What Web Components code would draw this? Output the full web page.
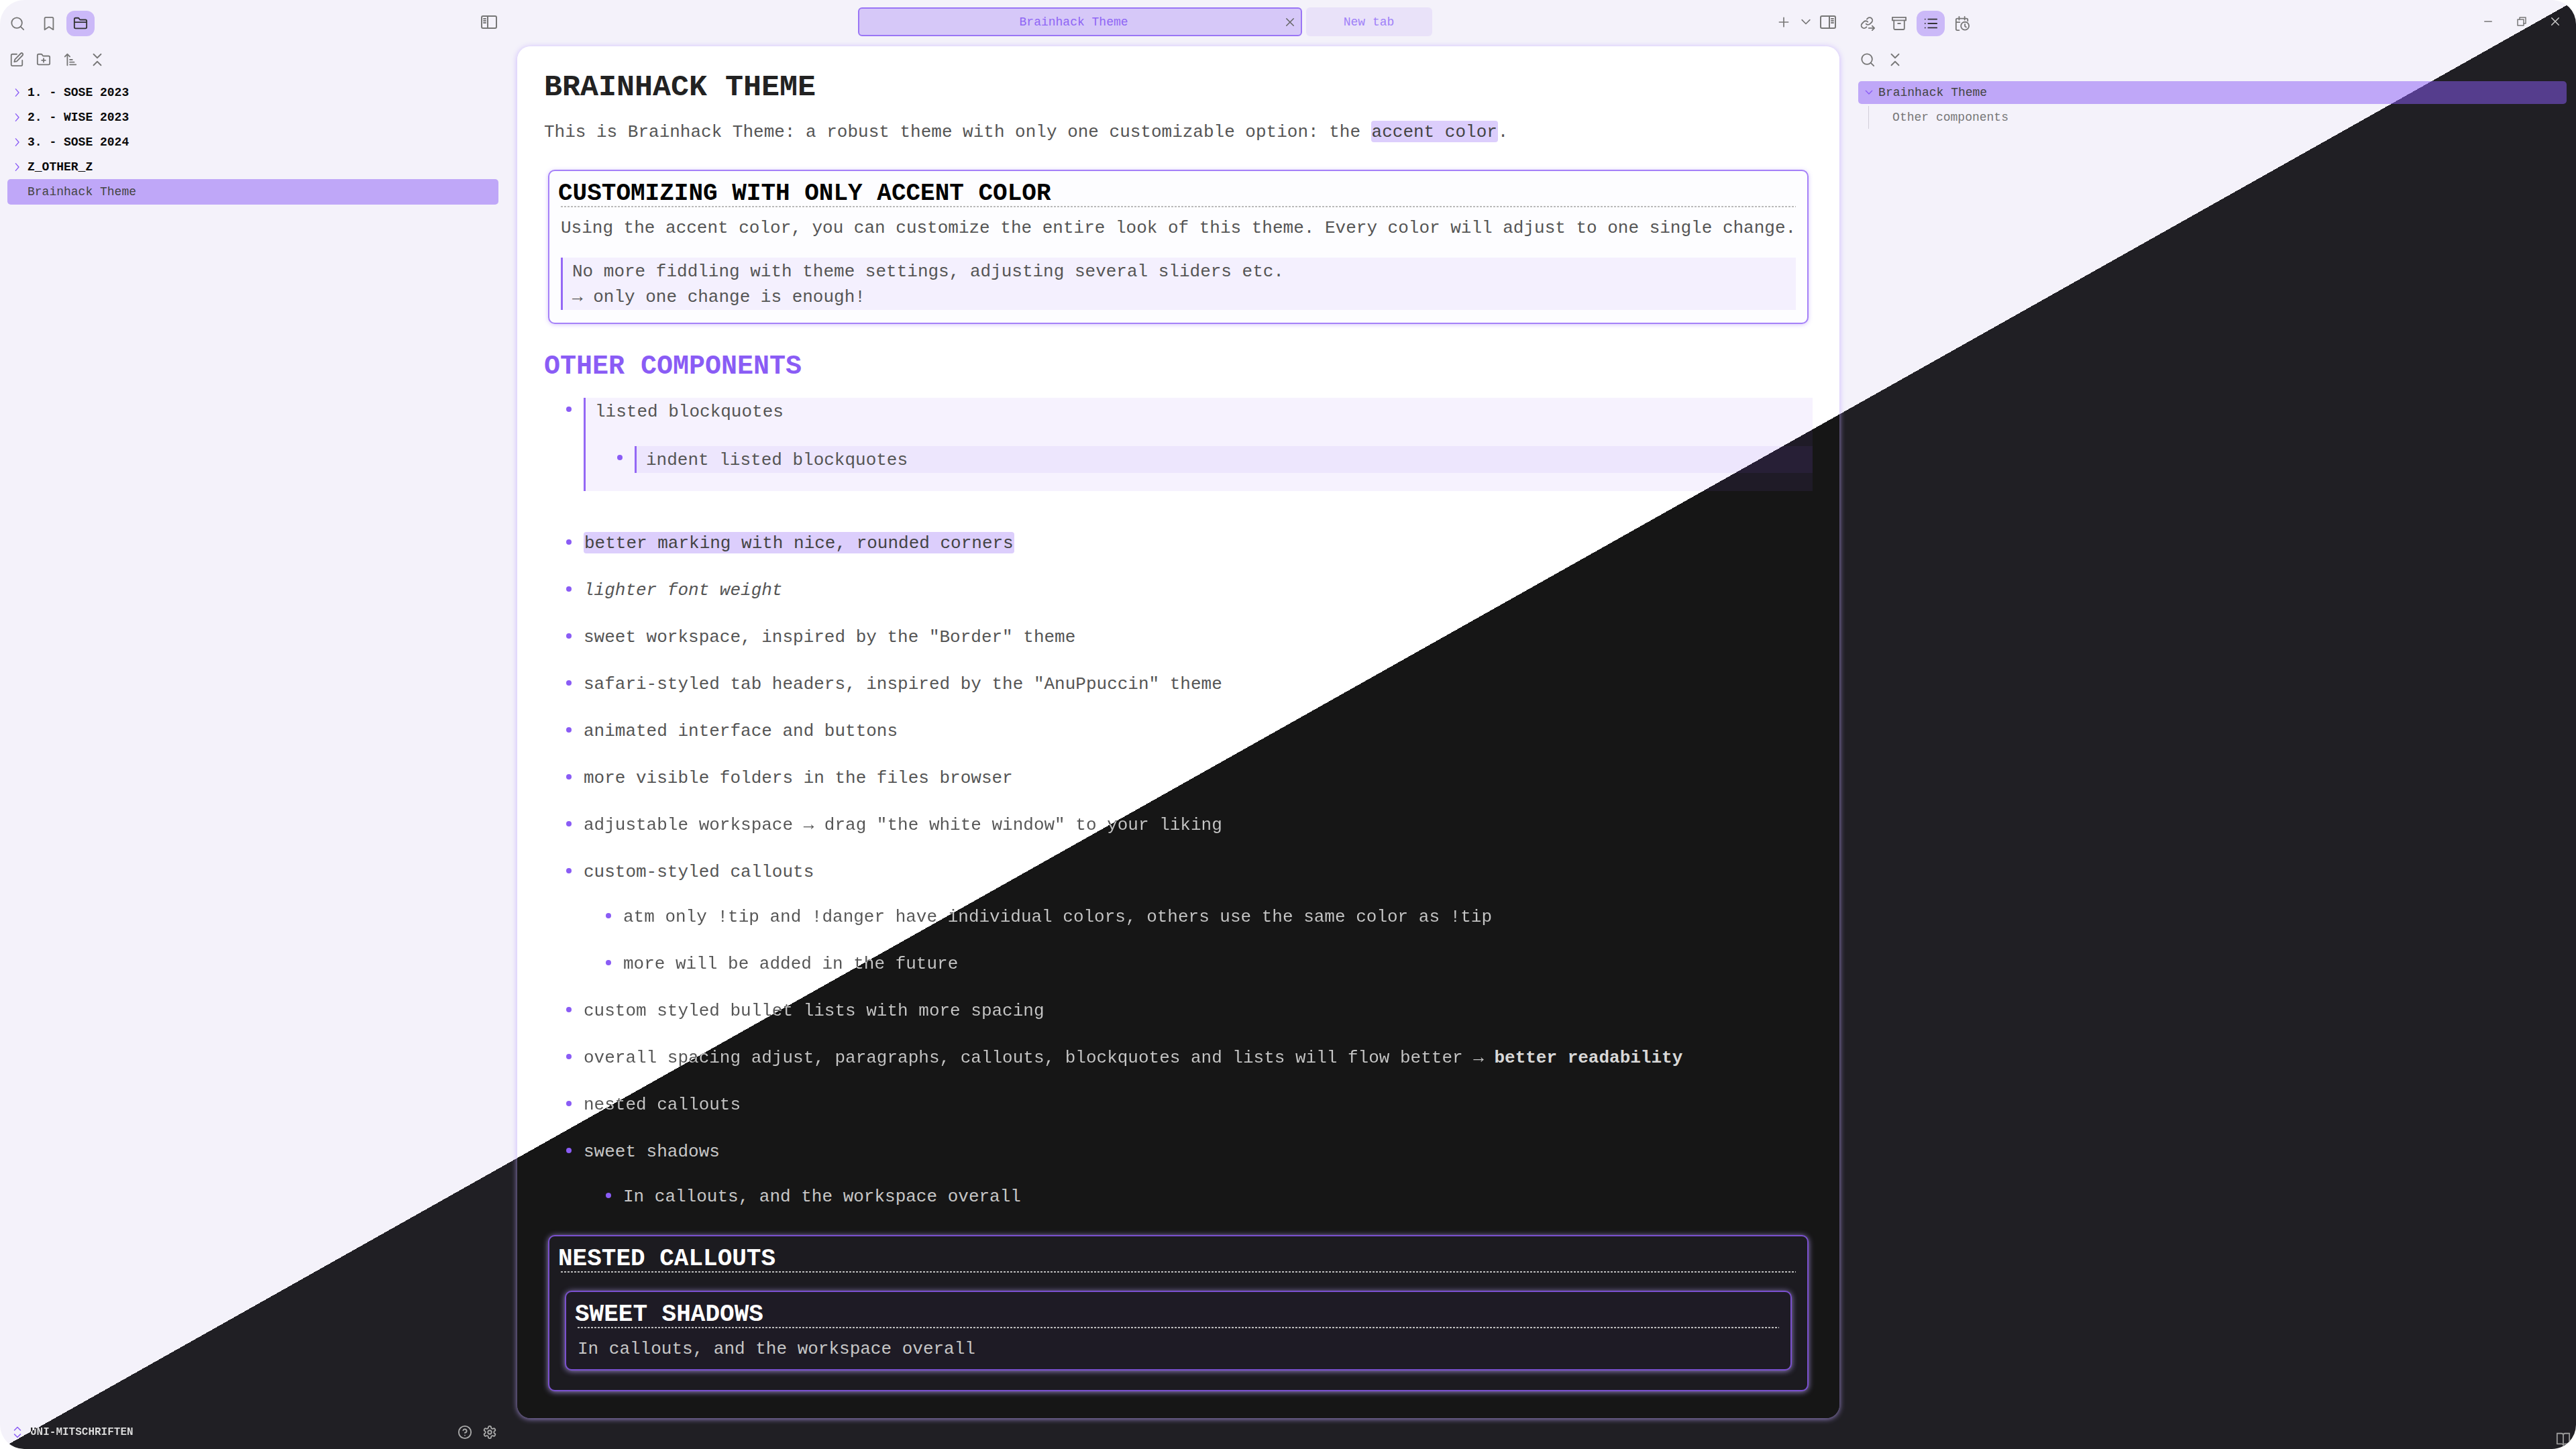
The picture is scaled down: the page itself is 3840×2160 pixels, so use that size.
<!DOCTYPE html>
<html lang="en">
<head>
<meta charset="utf-8">
<title>Brainhack Theme</title>
<style>
  html, body { margin: 0; height: 100%; background: #fff; }
  body {
    --accent: #8a5cf5;
    --split-text: linear-gradient(to bottom right, #555 50%, #c6c6c6 50%) fixed;
    font-family: "Liberation Mono", "DejaVu Sans Mono", monospace;
    font-size: 18px;
    color: #777;
  }
  h1, h2, p, ul { margin: 0; padding: 0; }
  h1 { font-size: 45px; line-height: 54px; color: #222; }
  h2 { font-size: 40px; line-height: 48px; color: var(--accent); margin-top: 40px; }
  p, li { font-size: 26px; line-height: 39px; color: #555; }
  h1 + p { margin: 20px 0 36px; }
  ul { list-style: none; padding-left: 33px; display: grid; gap: 31px; }
  li { display: grid; grid-template-columns: 8px 1fr; gap: 18px; }
  li::before { content: ""; width: 8px; height: 8px; border-radius: 4px; margin-top: 13px; background: var(--accent); }
  li ul { margin-top: 28px; }
  h2 + ul { margin: 22px 0 37px; }
  mark { background: rgba(138, 92, 245, .3); color: #444; border-radius: 4px; padding: 2px 1px 0; }
  .split { background: var(--split-text); -webkit-background-clip: text; background-clip: text; -webkit-text-fill-color: transparent; }
  .dark { color: #c6c6c6; }
  strong { color: #d8d8d8; }
  bh-quote ul { margin: 32px 0 27px; }
  .after-quote { margin-top: 28px; }
</style>
</head>
<body>
<bh-app>
  <bh-sidebar slot="left">
    <bh-button slot="tabs" icon="search" label="Search"></bh-button>
    <bh-button slot="tabs" icon="bookmark" label="Bookmarks"></bh-button>
    <bh-button slot="tabs" icon="folder" label="Files" active></bh-button>
    <bh-button slot="toggle" icon="panel-left" label="Collapse left sidebar"></bh-button>
    <bh-button slot="tools" icon="edit" label="New note"></bh-button>
    <bh-button slot="tools" icon="folder-plus" label="New folder"></bh-button>
    <bh-button slot="tools" icon="sort" label="Change sort order"></bh-button>
    <bh-button slot="tools" icon="collapse" label="Collapse all"></bh-button>
    <bh-folder>1. - SOSE 2023</bh-folder>
    <bh-folder>2. - WISE 2023</bh-folder>
    <bh-folder>3. - SOSE 2024</bh-folder>
    <bh-folder>Z_OTHER_Z</bh-folder>
    <bh-file>Brainhack Theme</bh-file>
    <bh-vault slot="footer">UNI-MITSCHRIFTEN</bh-vault>
  </bh-sidebar>

  <bh-tabbar slot="tabs">
    <bh-tab active>Brainhack Theme</bh-tab>
    <bh-tab>New tab</bh-tab>
    <bh-button slot="tools" icon="plus" label="New tab"></bh-button>
    <bh-button slot="tools" icon="down" label="Tab list"></bh-button>
    <bh-button slot="tools" icon="panel-right" label="Collapse right sidebar"></bh-button>
  </bh-tabbar>

  <bh-note slot="note">
    <h1>BRAINHACK THEME</h1>
    <p>This is Brainhack Theme: a robust theme with only one customizable option: the <mark>accent color</mark>.</p>
    <bh-callout heading="CUSTOMIZING WITH ONLY ACCENT COLOR">
      <p>Using the accent color, you can customize the entire look of this theme. Every color will adjust to one single change.</p>
      <bh-quote class="in-callout">No more fiddling with theme settings, adjusting several sliders etc.<br>→ only one change is enough!</bh-quote>
    </bh-callout>
    <h2>OTHER COMPONENTS</h2>
    <ul>
      <li><bh-quote>listed blockquotes
        <ul><li><bh-quote>indent listed blockquotes</bh-quote></li></ul>
      </bh-quote></li>
      <li class="after-quote"><div><mark>better marking with nice, rounded corners</mark></div></li>
      <li><em>lighter font weight</em></li>
      <li><div>sweet workspace, inspired by the "Border" theme</div></li>
      <li><div>safari-styled tab headers, inspired by the "AnuPpuccin" theme</div></li>
      <li><div>animated interface and buttons</div></li>
      <li><div>more visible folders in the files browser</div></li>
      <li><div><span class="split">adjustable workspace → drag "the white window" to your liking</span></div></li>
      <li><div>custom-styled callouts
        <ul>
          <li><div><span class="split">atm only !tip and !danger have individual colors, others use the same color as !tip</span></div></li>
          <li><div><span class="split">more will be added in the future</span></div></li>
        </ul></div></li>
      <li><div><span class="split">custom styled bullet lists with more spacing</span></div></li>
      <li><div><span class="split">overall spacing adjust, paragraphs, callouts, blockquotes and lists will flow better → </span><strong>better readability</strong></div></li>
      <li><div><span class="split">nested callouts</span></div></li>
      <li class="dark"><div>sweet shadows
        <ul><li class="dark"><div>In callouts, and the workspace overall</div></li></ul></div></li>
    </ul>
    <bh-callout dark heading="NESTED CALLOUTS">
      <bh-callout dark nested heading="SWEET SHADOWS">
        <p class="dark">In callouts, and the workspace overall</p>
      </bh-callout>
    </bh-callout>
  </bh-note>

  <bh-outline slot="right">
    <bh-button slot="tabs" icon="link" label="Outgoing links"></bh-button>
    <bh-button slot="tabs" icon="archive" label="Archive"></bh-button>
    <bh-button slot="tabs" icon="list" label="Outline" active></bh-button>
    <bh-button slot="tabs" icon="calendar" label="Calendar"></bh-button>
  </bh-outline>
</bh-app>

<script>
const cog = 'M12.22 2h-.44a2 2 0 0 0-2 2v.18a2 2 0 0 1-1 1.73l-.43.25a2 2 0 0 1-2 0l-.15-.08a2 2 0 0 0-2.73.73l-.22.38a2 2 0 0 0 .73 2.73l.15.1a2 2 0 0 1 1 1.72v.51a2 2 0 0 1-1 1.74l-.15.09a2 2 0 0 0-.73 2.73l.22.38a2 2 0 0 0 2.73.73l.15-.08a2 2 0 0 1 2 0l.43.25a2 2 0 0 1 1 1.73V20a2 2 0 0 0 2 2h.44a2 2 0 0 0 2-2v-.18a2 2 0 0 1 1-1.73l.43-.25a2 2 0 0 1 2 0l.15.08a2 2 0 0 0 2.73-.73l.22-.39a2 2 0 0 0-.73-2.73l-.15-.08a2 2 0 0 1-1-1.74v-.5a2 2 0 0 1 1-1.74l.15-.09a2 2 0 0 0 .73-2.73l-.22-.38a2 2 0 0 0-2.73-.73l-.15.08a2 2 0 0 1-2 0l-.43-.25a2 2 0 0 1-1-1.73V4a2 2 0 0 0-2-2z';
const folder = '<path d="M20 20a2 2 0 0 0 2-2V8a2 2 0 0 0-2-2h-7.9a2 2 0 0 1-1.7-.9L9.6 3.9A2 2 0 0 0 7.9 3H4a2 2 0 0 0-2 2v13a2 2 0 0 0 2 2Z"/>';
const ICONS = {
  search: '<circle cx="11" cy="11" r="8.5"/><path d="m22 22-5-5"/>',
  bookmark: '<path d="m19 22-7-4.500-7 4.500V4a2 2 0 0 1 2-2h10a2 2 0 0 1 2 2z"/>',
  folder: folder + '<path d="M2 10h20"/>',
  'folder-plus': folder + '<path d="M12 10v6M9 13h6"/>',
  edit: '<path d="M12 3H5a2 2 0 0 0-2 2v15a2 2 0 0 0 2 2h14a2 2 0 0 0 2-2v-7"/><path d="M18.4 1.9a2.1 2.1 0 0 1 3 3L12 14.5l-4 1 1-4Z"/>',
  sort: '<path d="m3 7 4-4 4 4M7 3v18M11 12h4M11 16h7M11 20h10"/>',
  collapse: '<path d="m6 21 6-6 6 6M6 3l6 6 6-6"/>',
  'panel-left': '<rect x="1" y="3" width="22" height="18" rx="2"/><path d="M10 3v18M4 7h3M4 10h3M4 13h3"/>',
  'panel-right': '<rect x="1" y="3" width="22" height="18" rx="2"/><path d="M14 3v18M17 7h3M17 10h3M17 13h3"/>',
  plus: '<path d="M4 12h16M12 4v16"/>',
  down: '<path d="m5 8 7 7 7-7"/>',
  right: '<path d="m8 4 7 8-7 8"/>',
  x: '<path d="M5 5l14 14M19 5 5 19"/>',
  link: '<path d="M9.5 12.6a4.5 4.5 0 0 0 6.4.1l2.6-2.6a4.5 4.5 0 0 0-6.4-6.4l-1.3 1.3"/><path d="M12.3 9.3a4.5 4.5 0 0 0-6.4-.1l-2.8 2.8a4.5 4.5 0 0 0 6.4 6.4l.8-.8"/><path d="M14 19.5h9M19.5 16l3.5 3.5-3.5 3.5"/>',
  archive: '<rect x="1" y="2" width="22" height="5"/><path d="M3.5 7v13a1.8 1.8 0 0 0 1.8 1.8h13.4a1.8 1.8 0 0 0 1.8-1.8V7M10 12h4"/>',
  list: '<path d="M8 5h14M8 12h14M8 19h14M3 5h.01M3 12h.01M3 19h.01"/>',
  calendar: '<path d="M21 8V6a2 2 0 0 0-2-2H4a2 2 0 0 0-2 2v15a2 2 0 0 0 2 2h3M16 1v5M7 1v5M2 10h6"/><circle cx="16.5" cy="16" r="6.5"/><path d="M16.5 13v3.5l2 1.5"/>',
  help: '<circle cx="12" cy="12" r="10"/><path d="M9.1 9a3 3 0 0 1 5.8 1c0 2-3 3-3 3M12 17h.01"/>',
  settings: '<path d="' + cog + '"/><circle cx="12" cy="12" r="3"/>',
  updown: '<path d="m6 8 6-6 6 6M6 16l6 6 6-6"/>',
  minimize: '<path d="M5 12h14"/>',
  restore: '<rect x="4" y="8" width="12" height="12"/><path d="M8 8V4h12v12h-4"/>',
  book: '<path d="M2 3h7a3 3 0 0 1 3 3v16a3 3 0 0 0-3-2H2ZM22 3h-7a3 3 0 0 0-3 3v16a3 3 0 0 1 3-2h7Z"/>'
};

const reset = `
  * { box-sizing: border-box; }
  button, a { font: inherit; color: inherit; background: none; border: 0; margin: 0; padding: 0; text-decoration: none; text-align: left; }
`;

function define(name, html) {
  customElements.define(name, class extends HTMLElement {
    connectedCallback() {
      if (this.shadowRoot) return;
      const template = document.createElement('template');
      template.innerHTML = '<style>' + reset + '</style>' + (typeof html === 'function' ? html(this) : html);
      this.attachShadow({ mode: 'open' }).append(template.content.cloneNode(true));
    }
  });
}

define('bh-icon', el => `
  <style>
    :host { display: inline-flex; flex: none; }
    svg { display: block; width: var(--icon, 22px); height: var(--icon, 22px); fill: none; stroke: currentColor; stroke-width: 2; stroke-linecap: round; stroke-linejoin: round; }
  </style>
  <svg viewBox="0 0 24 24" aria-hidden="true">${ICONS[el.getAttribute('name')]}</svg>`);

define('bh-button', el => `
  <style>
    :host { display: block; flex: none; color: #777; }
    button { display: flex; align-items: center; justify-content: center; width: var(--w, 42px); height: 38px; border-radius: 12px; }
    :host([active]) button { background: rgba(138, 92, 245, .38); color: #333; }
    :host([icon^="panel"]) { --icon: 24px; }
    :host([icon="plus"]), :host([icon="down"]) { --icon: 20px; }
  </style>
  <button aria-label="${el.getAttribute('label')}"><bh-icon name="${el.getAttribute('icon')}"></bh-icon></button>`);

define('bh-app', `
  <style>
    :host {
      display: grid; grid-template: 69px 1fr / 771px 1fr 1099px;
      min-height: 100vh; padding-bottom: 46px; box-sizing: border-box;
      border-radius: 36px; overflow: hidden;
      background: linear-gradient(to bottom right, #f4f2fa 50%, #201f24 50%) fixed;
    }
    .left, .right { grid-row: 1 / 3; display: grid; margin-bottom: -46px; }
    .left { grid-column: 1; }
    .right { grid-column: 3; }
    .tabs { grid-column: 2; grid-row: 1; display: grid; }
    .note { grid-column: 2; grid-row: 2; display: grid; }
  </style>
  <aside class="left"><slot name="left"></slot></aside>
  <nav class="tabs"><slot name="tabs"></slot></nav>
  <main class="note"><slot name="note"></slot></main>
  <aside class="right"><slot name="right"></slot></aside>`);

define('bh-sidebar', `
  <style>
    :host { display: flex; flex-direction: column; }
    header { display: flex; align-items: flex-start; justify-content: space-between; height: 38px; margin-top: 16px; padding: 0 21px 0 5px; }
    .tabs { display: flex; gap: 5px; }
    .toggle { margin-top: -2px; }
    .tools { display: flex; --w: 40px; padding: 16px 0 0 5px; height: 49px; box-sizing: content-box; }
    .tree { flex: 1; padding: 0 28px 0 11px; }
  </style>
  <header><div class="tabs"><slot name="tabs"></slot></div><div class="toggle"><slot name="toggle"></slot></div></header>
  <div class="tools"><slot name="tools"></slot></div>
  <nav class="tree"><slot></slot></nav>
  <slot name="footer"></slot>`);

define('bh-folder', `
  <style>
    :host { display: block; }
    button { display: flex; align-items: center; gap: 7px; width: 100%; height: 37px; padding-left: 7px; font-weight: bold; color: #0a0a0a; }
    bh-icon { --icon: 16px; color: #8a5cf5; }
  </style>
  <button><bh-icon name="right"></bh-icon><slot></slot></button>`);

define('bh-file', `
  <style>
    :host { display: block; }
    a { display: flex; align-items: center; height: 38px; padding-left: 30px; border-radius: 5px; background: rgba(138, 92, 245, .5); color: #444; }
  </style>
  <a href="#"><slot></slot></a>`);

define('bh-vault', `
  <style>
    :host { display: flex; align-items: center; justify-content: space-between; height: 38px; margin-bottom: 6px; padding: 0 23px 0 17px; }
    .name { display: flex; align-items: center; gap: 10px; font-size: 16px; font-weight: bold; }
    .name bh-icon { --icon: 18px; color: #8a5cf5; }
    .name span { color: #ddd; background: linear-gradient(to bottom right, #222 50%, #ddd 50%) fixed; -webkit-background-clip: text; background-clip: text; -webkit-text-fill-color: transparent; }
    .tools { display: flex; --w: 37px; }
    .tools bh-button { color: #aaa; }
  </style>
  <button class="name"><bh-icon name="updown"></bh-icon><span><slot></slot></span></button>
  <div class="tools"><bh-button icon="help" label="Help"></bh-button><bh-button icon="settings" label="Settings"></bh-button></div>`);

define('bh-tabbar', `
  <style>
    :host { display: flex; align-items: flex-start; padding-top: 11px; }
    .tabs { flex: 1; display: flex; justify-content: center; gap: 6px; }
    .tools { display: flex; align-items: center; height: 43px; width: 100px; --w: 33px; }
  </style>
  <div class="tabs"><slot></slot></div>
  <div class="tools"><slot name="tools"></slot></div>`);

define('bh-tab', el => `
  <style>
    :host { display: flex; align-items: center; width: 188px; height: 43px; padding: 0 7px; box-sizing: border-box; border-radius: 6px; background: rgba(138, 92, 245, .1); color: #a081f8; }
    :host([active]) { width: 662px; background: rgba(138, 92, 245, .28); border: 2px solid #9a75f5; color: #8f66f5; }
    .title { flex: 1; text-align: center; }
    .close { display: flex; --icon: 18px; color: #666; }
  </style>
  <button class="title"><slot></slot></button>
  ${el.hasAttribute('active') ? '<button class="close" aria-label="Close tab"><bh-icon name="x"></bh-icon></button>' : ''}`);

define('bh-note', `
  <style>
    :host {
      display: block; padding: 35px 40px 0; border-radius: 20px;
      background: linear-gradient(to bottom right, #fff 50%, #161616 50%) fixed;
      box-shadow: 0 1px 8px rgba(190, 165, 255, .8);
    }
  </style>
  <article><slot></slot></article>`);

define('bh-callout', el => `
  <style>
    :host {
      display: block; margin: 0 6px; padding: 16px 17px 10px; border: 2px solid #a581f8; border-radius: 10px;
      background: #fdfdff; box-shadow: 0 1px 6px rgba(138, 92, 245, .35); color: #000;
    }
    :host([dark]) { background: #1c1b20; border-color: #7a50cf; box-shadow: 0 1px 9px rgba(190, 165, 255, .75); color: #fff; }
    :host([nested]) { background: #1e1b25; margin: 15px 6px 19px; }
    h3 { margin: 0 0 0 -4px; font-size: 36px; line-height: 36px; white-space: nowrap; }
    .rule { height: 2px; background: repeating-linear-gradient(to right, #bbb 0 3px, transparent 3px 5px); }
    .body { white-space: nowrap; display: flow-root; padding-top: 12px; }
    ::slotted(.in-callout) { margin: 24px 0 9px; --quote: rgba(138, 92, 245, .08); }
  </style>
  <h3>${el.getAttribute('heading')}</h3>
  <div class="rule"></div>
  <div class="body"><slot></slot></div>`);

define('bh-quote', `
  <style>
    :host {
      display: flow-root; padding: 2px 0 0 14px; border-left: 3px solid #9468f5;
      background: var(--quote, rgba(138, 92, 245, .077)); font-size: 26px; line-height: 38px; color: #555;
    }
  </style>
  <slot></slot>`);

define('bh-outline', `
  <style>
    :host { display: flex; flex-direction: column; }
    header { display: flex; justify-content: space-between; padding: 0 15px 0 21px; margin-top: 16px; }
    .tabs { display: flex; gap: 5px; }
    .window { display: flex; --w: 50px; --icon: 18px; align-items: center; height: 32px; margin-right: -8px; }
    .window bh-button:last-child { color: #ccc; }
    .tools { display: flex; --w: 41px; padding: 16px 0 0 21px; height: 51px; box-sizing: content-box; }
    .tree { flex: 1; padding: 0 15px 0 28px; }
    a { display: flex; align-items: center; }
    .current { height: 34px; gap: 6px; padding-left: 8px; border-radius: 5px; background: rgba(138, 92, 245, .5); color: #444; }
    .current bh-icon { --icon: 16px; color: #8a5cf5; }
    .child { height: 34px; margin: 3px 0 0 15px; padding-left: 35px; border-left: 1px solid #d2cfda; color: #777; }
    footer { display: flex; justify-content: flex-end; height: 26px; padding-right: 9px; color: #999; --icon: 22px; }
  </style>
  <header>
    <div class="tabs"><slot name="tabs"></slot></div>
    <div class="window">
      <bh-button icon="minimize" label="Minimize"></bh-button>
      <bh-button icon="restore" label="Restore"></bh-button>
      <bh-button icon="x" label="Close"></bh-button>
    </div>
  </header>
  <div class="tools"><bh-button icon="search" label="Search headings"></bh-button><bh-button icon="collapse" label="Collapse all"></bh-button></div>
  <nav class="tree">
    <a class="current" href="#"><bh-icon name="down"></bh-icon>Brainhack Theme</a>
    <a class="child" href="#">Other components</a>
  </nav>
  <footer><bh-icon name="book"></bh-icon></footer>`);
</script>
</body>
</html>
